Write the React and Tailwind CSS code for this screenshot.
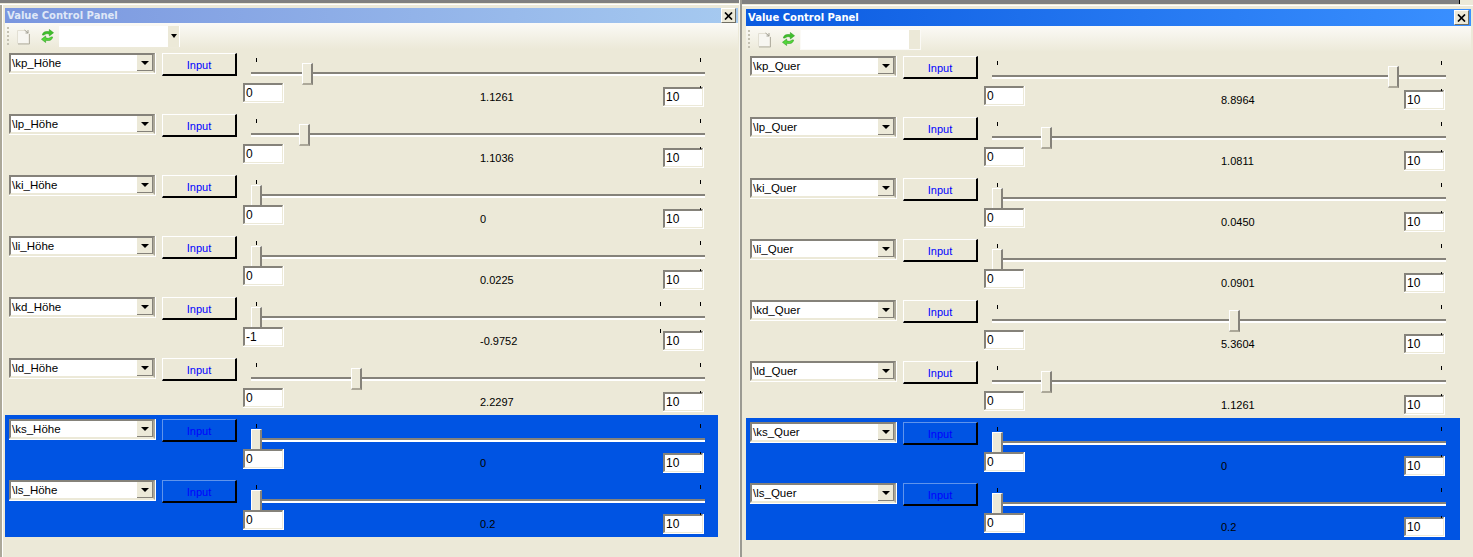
const LEFT_ROWS = [
  { name: '\\kp_Höhe', thumb: 64, min: '0', value: '1.1261' },
  { name: '\\lp_Höhe', thumb: 61, min: '0', value: '1.1036' },
  { name: '\\ki_Höhe', thumb: 13, min: '0', value: '0' },
  { name: '\\li_Höhe', thumb: 13, min: '0', value: '0.0225' },
  { name: '\\kd_Höhe', thumb: 13, min: '-1', value: '-0.9752', extraTicks: true },
  { name: '\\ld_Höhe', thumb: 113, min: '0', value: '2.2297' },
];
const LEFT_BLUE = [
  { name: '\\ks_Höhe', thumb: 13, min: '0', value: '0' },
  { name: '\\ls_Höhe', thumb: 13, min: '0', value: '0.2' },
];
const RIGHT_ROWS = [
  { name: '\\kp_Quer', thumb: 409, min: '0', value: '8.8964' },
  { name: '\\lp_Quer', thumb: 62, min: '0', value: '1.0811' },
  { name: '\\ki_Quer', thumb: 13, min: '0', value: '0.0450' },
  { name: '\\li_Quer', thumb: 13, min: '0', value: '0.0901' },
  { name: '\\kd_Quer', thumb: 250, min: '0', value: '5.3604' },
  { name: '\\ld_Quer', thumb: 62, min: '0', value: '1.1261' },
];
const RIGHT_BLUE = [
  { name: '\\ks_Quer', thumb: 13, min: '0', value: '0' },
  { name: '\\ls_Quer', thumb: 13, min: '0', value: '0.2' },
];

function PageIcon() {
  return (
    <svg width="14" height="17" viewBox="0 0 14 17" className="shrink-0">
      <path d="M0.5 2.5 H8.5 L12 5.5 V15.5 H0.5 Z" fill="#f7f6f1" stroke="#e2dfd3" />
      <path d="M12.5 6 V16 H1" fill="none" stroke="#b4b1a3" />
      <path d="M7.5 2 L11 5 M11 2 V5 H8.5" fill="none" stroke="#a3a195" />
    </svg>
  );
}

function RefreshIcon() {
  return (
    <svg width="13" height="16" viewBox="0 0 14 16" className="shrink-0">
      <path d="M1.5 7 C2 3.5 5 2.5 9 3.5 L9 1 L13.5 4.5 L9 8 L9 6 C6 5 4.5 5.5 3.5 7 Z" fill="#3fc02a" stroke="#2b9a1e" strokeWidth="0.6" />
      <path d="M12.5 9 C12 12.5 9 13.5 5 12.5 L5 15 L0.5 11.5 L5 8 L5 10 C8 11 9.5 10.5 10.5 9 Z" fill="#52d838" stroke="#2b9a1e" strokeWidth="0.6" />
    </svg>
  );
}

function Toolbar({ right }) {
  return (
    <div className="flex h-[26px] shrink-0 items-center bg-gradient-to-b from-[#fbfaf6] to-[#ece9d8]">
      <div className="ml-[2px] flex w-[2px] flex-col gap-[2px]">
        <span className="h-[2px] bg-[#c4c1b2]" />
        <span className="h-[2px] bg-[#c4c1b2]" />
        <span className="h-[2px] bg-[#c4c1b2]" />
        <span className="h-[2px] bg-[#c4c1b2]" />
        <span className="h-[2px] bg-[#c4c1b2]" />
      </div>
      <div className="ml-[8px]"><PageIcon /></div>
      <div className="ml-[10px]"><RefreshIcon /></div>
      {right ? (
        <div className="ml-[5px] flex h-[21px] w-[121px] justify-end border border-[#fbfaf6] bg-white">
          <div className="w-[11px] bg-[#ece9d8]" />
        </div>
      ) : (
        <div className="ml-[5px] flex h-[21px] w-[121px] items-center justify-end bg-white pr-[1px]">
          <div className="flex h-full w-[11px] items-center justify-center bg-[#ece9d8]">
            <span className="border-x-[3px] border-t-[4px] border-x-transparent border-t-black" />
          </div>
        </div>
      )}
    </div>
  );
}

function Combo({ name }) {
  return (
    <div className="h-[21px] w-[147px] shrink-0 border-r border-b border-white">
      <div className="flex h-full items-center justify-between border-2 border-t-[#85827a] border-l-[#85827a] border-r-[#aca899] border-b-[#ece9d8] bg-white pl-[1px]">
        <span className="text-[11.5px] leading-[14px] text-black">{name}</span>
        <span className="flex h-[16px] w-[16px] items-center justify-center border-r border-b border-[#85827a] bg-[#ece9d8]">
          <span className="border-x-[4px] border-t-[4px] border-x-transparent border-t-black" />
        </span>
      </div>
    </div>
  );
}

function InputButton({ blue }) {
  return (
    <div className={`ml-[6px] flex h-[23px] w-[75px] shrink-0 items-center justify-center border-t border-l border-r-2 border-b-2 border-r-black border-b-black pt-[2px] text-[11px] text-[#0000ff] ${blue ? 'border-t-[#5f94ec] border-l-[#5f94ec]' : 'border-t-white border-l-white'}`}>
      Input
    </div>
  );
}

function Field({ value }) {
  return (
    <div className="relative z-10 h-[20px] w-[41px] shrink-0 border-r border-b border-white">
      <div className="flex h-full items-center border-t-2 border-l-2 border-t-[#85827a] border-l-[#85827a] border-r border-b border-r-[#ece9d8] border-b-[#ece9d8] bg-white pl-[1px] text-[12px] leading-none text-black">
        {value}
      </div>
    </div>
  );
}

function Tick({ x, y }) {
  return <span className="absolute h-[4px] w-[1px] bg-black" style={{ left: x, top: y }} />;
}

function Slider({ row }) {
  return (
    <div className="relative h-[30px]">
      <div className="absolute top-[19px] right-0 left-[8px] h-[4px] border-t-2 border-b-2 border-t-[#85827a] border-b-white" />
      <Tick x={13} y={5} />
      <Tick x={457} y={5} />
      {row.extraTicks && <Tick x={417} y={5} />}
      <div className="absolute top-[10px] h-[22px] w-[11px] border-t border-l border-r-2 border-b-2 border-t-white border-l-white border-r-[#85827a] border-b-[#aca899] bg-[#ece9d8]" style={{ left: row.thumb - 5 }} />
    </div>
  );
}

function Row({ row, blue }) {
  return (
    <div className="flex h-[61px] items-start pt-[4px] pl-[4px]">
      <Combo name={row.name} />
      <InputButton blue={blue} />
      <div className="ml-[6px] w-[462px] shrink-0">
        <Slider row={row} />
        <div className="relative flex items-start">
          <Field value={row.min} />
          <div className="flex-1 pt-[7px] pl-[196px] text-[11px] leading-[14px] text-black">{row.value}</div>
          <div className="relative mt-[4px] mr-[1px]">
            <Field value="10" />
            <span className="absolute -top-[1px] left-[37px] z-20 h-[2px] w-[1px] bg-black" />
          </div>
          {row.extraTicks && <span className="absolute top-[2px] left-[417px] h-[4px] w-[1px] bg-black" />}
        </div>
      </div>
    </div>
  );
}

function CloseButton() {
  return (
    <div className="flex h-[15px] w-[15px] items-center justify-center border-t border-l border-r border-b border-t-white border-l-white border-r-[#716f64] border-b-[#716f64] bg-[#ece9d8]">
      <svg width="9" height="8" viewBox="0 0 9 8">
        <path d="M1 0.5 L8 7.5 M8 0.5 L1 7.5" stroke="black" strokeWidth="1.7" fill="none" />
      </svg>
    </div>
  );
}

function Panel({ rows, blueRows, right }) {
  return (
    <div className="flex h-full flex-col">
      <div className={`flex shrink-0 items-center justify-between pr-[2px] pl-[2px] ${right ? 'h-[17px] bg-gradient-to-r from-[#0a5ae0] to-[#3a90ff]' : 'h-[15px] bg-gradient-to-r from-[#7a96df] to-[#a6caf0]'}`}>
        <span className={`text-[10px] leading-[14px] font-bold ${right ? 'text-white' : 'text-[#dfe7f7]'}`} style={{ fontFamily: '"DejaVu Sans", sans-serif' }}>
          Value Control Panel
        </span>
        <CloseButton />
      </div>
      <Toolbar right={right} />
      {rows.map((row) => <Row key={row.name} row={row} />)}
      <div className={`bg-[#0054e3] ${right ? 'w-[714px]' : 'w-[713px]'}`}>
        {blueRows.map((row) => <Row key={row.name} row={row} blue />)}
      </div>
    </div>
  );
}

export default function App() {
  return (
    <div className="flex h-[557px] w-[1473px] overflow-hidden bg-[#ece9d8] font-['Liberation_Sans',Arial,sans-serif]">
      {/* left window */}
      <div className="flex h-full w-[740px] shrink-0 flex-col border-r border-r-[#f7f6f0]">
        <div className="h-[3px] shrink-0 bg-[#808080]" />
        <div className="h-[2px] shrink-0 border-b border-white" />
        <div className="flex min-h-0 flex-1">
          <div className="w-[2px] shrink-0 bg-[#aca899]" />
          <div className="w-[1px] shrink-0 bg-white" />
          <div className="ml-[2px] w-[733px] shrink-0 pt-[3px]">
            <Panel rows={LEFT_ROWS} blueRows={LEFT_BLUE} />
          </div>
        </div>
      </div>
      <div className="w-[2px] shrink-0 bg-[#9b9a92]" />
      {/* right window */}
      <div className="flex h-full min-w-0 flex-1 flex-col">
        <div className="flex h-[4px] shrink-0 bg-[#808080]">
          <div className="w-[717px]" />
          <div className="w-[1px] bg-black" />
          <div className="flex-1 bg-[#ece9d8]" />
        </div>
        <div className="h-[2px] shrink-0 border-b border-white" />
        <div className="ml-[4px] w-[725px] pt-[3px]">
          <Panel rows={RIGHT_ROWS} blueRows={RIGHT_BLUE} right />
        </div>
      </div>
    </div>
  );
}
